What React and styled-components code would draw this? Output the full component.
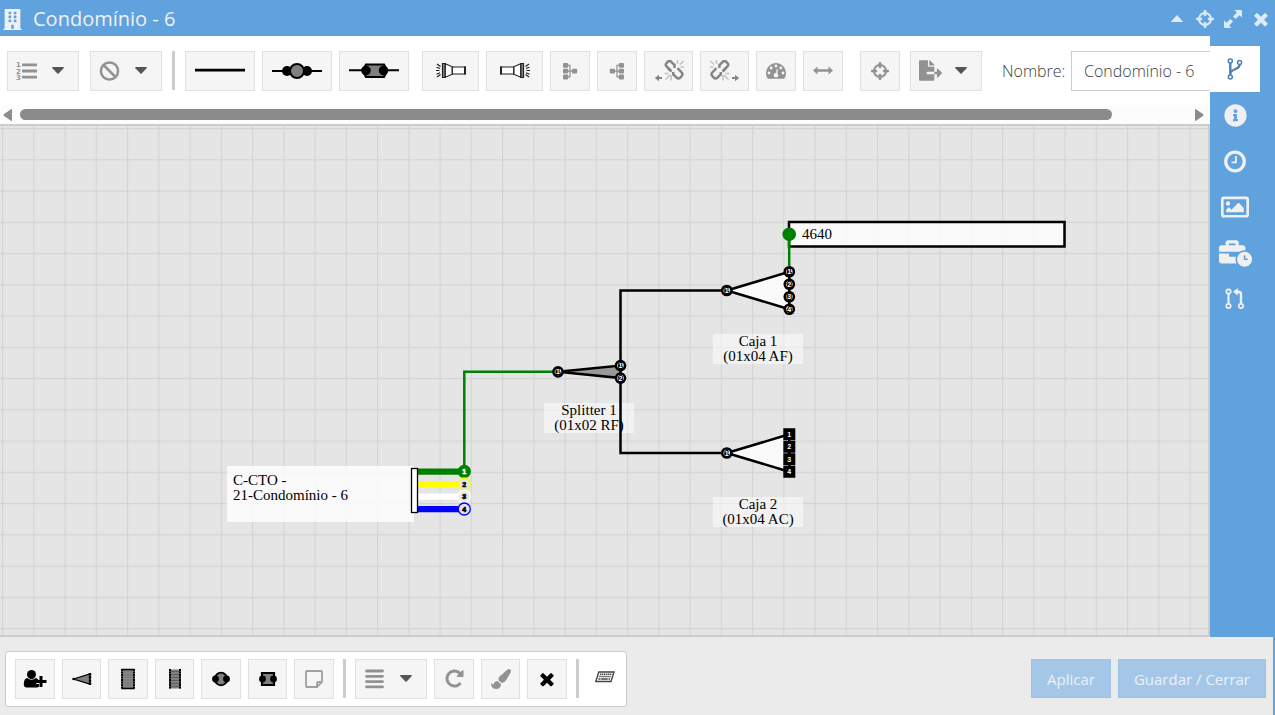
import React, { useState } from 'react';
import styled, { createGlobalStyle } from 'styled-components';
import { FaBuilding, FaFileExport, FaInfoCircle, FaRegImage, FaBusinessTime, FaPaintBrush } from 'react-icons/fa';

const GlobalStyle = createGlobalStyle`
  * { box-sizing: border-box; }
  html, body, #root { height: 100%; }
  body {
    margin: 0;
    overflow: hidden;
    font-family: "Open Sans", "Noto Sans", sans-serif;
    font-size: 16px;
    color: #404040;
  }
`;

const Window = styled.div`
  height: 100%;
  display: flex;
  flex-direction: column;
  background: #5fa2dd;
`;

const TitleBar = styled.header`
  height: 36px;
  flex: none;
  display: flex;
  align-items: center;
  padding: 2px 4px 0 2px;
  color: #f0f0f0;
`;

const Title = styled.h1`
  flex: 1;
  margin: 0 0 0 10px;
  font-size: 20px;
  font-weight: 400;
  line-height: 28px;
`;

const WindowActions = styled.div`
  display: flex;
  gap: 8px;
`;

const PlainButton = styled.button`
  display: flex;
  align-items: center;
  justify-content: center;
  width: 20px;
  height: 20px;
  padding: 0;
  border: 0;
  background: none;
  color: #dcecf9;
`;

const Body = styled.div`
  flex: 1;
  min-height: 0;
  display: flex;
`;

const Main = styled.main`
  flex: 1;
  min-width: 0;
  display: flex;
  flex-direction: column;
  background: #fff;
`;

const Toolbar = styled.div`
  height: 69px;
  flex: none;
  display: flex;
  align-items: center;
  padding-left: 7px;
  overflow: hidden;
`;

const ToolGroup = styled.div`
  display: flex;
  gap: ${(p) => p.$gap || 7}px;
  margin-right: ${(p) => p.$after || 0}px;
`;

const ToolButton = styled.button`
  flex: none;
  display: flex;
  align-items: center;
  justify-content: center;
  width: ${(p) => p.$width || 40}px;
  height: 40px;
  padding: 0;
  border: 1px solid #e0e0e0;
  background: #f5f5f5;
  color: ${(p) => (p.$dark ? '#000' : '#929292')};
`;

const MenuButton = styled(ToolButton)`
  width: 72px;
  justify-content: space-between;
  padding: 0 14px 0 8px;
`;

const Separator = styled.div`
  flex: none;
  width: 3px;
  height: 39px;
  margin: 0 ${(p) => p.$space}px;
  background: #ccc;
`;

const NameLabel = styled.label`
  flex: none;
  width: 69px;
  font-weight: 300;
  line-height: 24px;
`;

const NameInput = styled.input`
  flex: none;
  width: 200px;
  height: 40px;
  padding: 0 12px;
  border: 1px solid #ccc;
  background: #fff;
  font: inherit;
  font-weight: 300;
  color: #404040;
`;

const ScrollBar = styled.div`
  height: 19px;
  flex: none;
  display: flex;
  align-items: center;
  justify-content: space-between;
  padding: 0 6px 0 3px;
  background: #fcfcfc;
  color: #8b8b8b;
`;

const ScrollTrack = styled.div`
  flex: 1;
  margin: 0 7px 0 8px;
`;

const ScrollThumb = styled.div`
  width: 93.5%;
  height: 11px;
  border-radius: 6px;
  background: #8b8b8b;
`;

const CanvasFrame = styled.div`
  flex: 1;
  min-height: 0;
  border: solid #ccc;
  border-width: 2px 2px 2px 0;
  background: #e5e5e5;
`;

const Diagram = styled.svg`
  display: block;
  width: 100%;
  height: 100%;
  font-family: "Liberation Serif", serif;
  font-size: 15px;
`;

const PortNumber = styled.text`
  font-family: "Liberation Sans", sans-serif;
  font-size: 7px;
  font-weight: 700;
  text-anchor: middle;
  paint-order: stroke;
`;

const SideBar = styled.nav`
  width: 65px;
  flex: none;
  padding-top: 10px;
  color: #f0f0f0;
`;

const SideTab = styled.button`
  display: flex;
  align-items: center;
  justify-content: center;
  width: 50px;
  height: 46px;
  padding: 0;
  border: 0;
  background: ${(p) => (p.$active ? '#fff' : 'none')};
  color: ${(p) => (p.$active ? '#4a80b4' : 'inherit')};

  svg { overflow: visible; }
`;

const Footer = styled.footer`
  height: 78px;
  flex: none;
  display: flex;
  align-items: center;
  justify-content: space-between;
  margin-right: 2px;
  padding: 5px 7px 0 5px;
  background: #ebebeb;
`;

const BottomTools = styled.div`
  display: flex;
  align-items: center;
  height: 56px;
  padding: 0 4px 0 9px;
  border: 1px solid #ccc;
  border-radius: 3px;
  background: #fff;
`;

const KeyboardButton = styled(PlainButton)`
  width: 34px;
  height: 40px;
  color: #444;
`;

const FooterActions = styled.div`
  display: flex;
  gap: 7px;
`;

const ActionButton = styled.button`
  height: 39px;
  padding: 0 15px;
  border: 1px solid #9cc3e6;
  background: #a5c7e7;
  color: #ebf1f7;
  font: inherit;
  font-size: 15px;
`;

const Svg = ({ w, h, children }) => (
  <svg width={w} height={h} viewBox={`0 0 ${w} ${h}`} fill="currentColor" aria-hidden="true">
    {children}
  </svg>
);

const CaretDown = () => (
  <Svg w={12} h={7}>
    <path d="M0.8 0h10.4q1 0.4 0.4 1.2L6.6 6.5q-.6.5-1.2 0L.4 1.2Q-.2.4.8 0z" fill="#555" />
  </Svg>
);

const ListIcon = () => (
  <Svg w={22} h={20}>
    <path d="M6 2.400h15v2.800H6zM6 8.600h15v2.800H6zM6 14.800h15v2.800H6z" />
    <g fontSize="7" fontWeight="700" fontFamily="DejaVu Sans, sans-serif">
      <text x="0" y="6">1</text>
      <text x="0" y="12.500">2</text>
      <text x="0" y="19">3</text>
    </g>
  </Svg>
);

const BanIcon = () => (
  <Svg w={22} h={20}>
    <g fill="none" stroke="currentColor" strokeWidth="2.500">
      <circle cx="10.500" cy="10" r="8.600" />
      <path d="M4.500 4l12 12" />
    </g>
  </Svg>
);

const LineIcon = () => (
  <Svg w={50} h={16}>
    <path d="M0 5.800h50v2.600H0z" />
  </Svg>
);

const RoundSpliceIcon = () => (
  <Svg w={50} h={16}>
    <path d="M0 7h50v2H0z" />
    <circle cx="15" cy="8" r="5" />
    <circle cx="35" cy="8" r="5" />
    <circle cx="25" cy="8" r="7" fill="#808080" stroke="#000" strokeWidth="2" />
  </Svg>
);

const BoxSpliceIcon = () => (
  <Svg w={50} h={16}>
    <path d="M0 6.200h50v2H0z" />
    <path d="M17 1.500h18l2 4v4l-2 4.500H17l-2-4.500v-4z" fill="#808080" stroke="#000" strokeWidth="2.200" />
    <circle cx="17" cy="7.500" r="4.800" />
    <circle cx="34.500" cy="7.500" r="4.800" />
  </Svg>
);

const TorchIcon = ({ flip }) => (
  <Svg w={30} h={18}>
    <g transform={flip ? 'translate(30 0) scale(-1 1)' : undefined} fill="none" stroke="#222" strokeWidth="1.200">
      <path d="M0 8.500h3.500M.5 5.200l3.500 1.300M.5 12.200l3.500-1.500M1 2l3.500 2.500M1 15l3.500-2.500" />
      <path d="M6.500 1.500h2.800v14H6.500z" fill="#888" />
      <path d="M9.300 1.800l7 3v7.400l-7 3z" fill="#fff" />
      <path d="M16.300 5H29v7H16.300z" fill="#fff" />
      <path d="M29 4.500v8" strokeWidth="2" />
    </g>
  </Svg>
);

const TreeIcon = ({ flip }) => (
  <Svg w={16} h={18}>
    <g transform={flip ? 'translate(16 0) scale(-1 1)' : undefined}>
      <rect x="1" y="1" width="5.200" height="4.800" rx="1" />
      <rect x="1" y="6.800" width="5.200" height="4.800" rx="1" />
      <rect x="1" y="12.600" width="5.200" height="4.800" rx="1" />
      <rect x="10" y="6.800" width="5.200" height="4.800" rx="1" />
      <path d="M5 3.300h3v11.500H5M5 9.200h6" fill="none" stroke="currentColor" strokeWidth="1.200" />
    </g>
  </Svg>
);

const UnlinkIcon = ({ flip }) => (
  <Svg w={30} h={22}>
    <g transform={flip ? 'translate(30 0) scale(-1 1)' : undefined} fill="none" stroke="#858585" strokeWidth="2.500">
      <path d="M16.500 10.500l-4-4q-1.500-1.800 0-3.500l1.200-1.200q1.800-1.500 3.500 0L20.600 5v3" />
      <path d="M14.500 8.500l3 3" />
      <path d="M23.500 8.200l4.200 4.300q1.500 1.800 0 3.500l-1.500 1.700q-1.800 1.500-3.500 0l-3.500-3.300v-2.500" />
      <path d="M23.500 0v4M29.500 1l-3.500 3.500M26.500 7h3.500M17 15v5.500M10.500 13.500h4M16 15l-4.500 4.500" stroke="#c4c4c4" strokeWidth="1.600" />
      <path d="M3 18h5" strokeWidth="2" />
      <path d="M5 14.800L.8 18 5 21.200z" fill="#858585" stroke="none" />
    </g>
  </Svg>
);

const GaugeIcon = () => (
  <Svg w={22} h={18}>
    <path d="M11 1a10 10 0 0 0-10 10q0 3 1.500 5.300.3.500.9.500h15.200q.6 0 .9-.5Q21 14 21 11A10 10 0 0 0 11 1z" />
    <g fill="#f5f5f5">
      <circle cx="4" cy="11" r="1.400" />
      <circle cx="6.200" cy="6" r="1.400" />
      <circle cx="11" cy="4" r="1.400" />
      <circle cx="15.800" cy="6" r="1.400" />
      <circle cx="18" cy="11" r="1.400" />
      <circle cx="11" cy="13.300" r="2.300" />
      <path d="M10.300 12.500L12 6.800l1 .3-1.100 6z" />
    </g>
  </Svg>
);

const ArrowsIcon = () => (
  <Svg w={20} h={16}>
    <path d="M0 7.500L4.500 3.500v2.800h11V3.500L20 7.500l-4.500 4V8.700h-11v2.800z" />
  </Svg>
);

const TargetIcon = () => (
  <Svg w={18} h={18}>
    <circle cx="9" cy="9" r="6" fill="none" stroke="currentColor" strokeWidth="2" />
    <path d="M8 .3h2v5.500H8zM8 12.200h2v5.500H8zM.3 8h5.500v2H.3zM12.200 8h5.500v2h-5.500z" stroke="currentColor" strokeWidth=".6" />
  </Svg>
);

const ExpandIcon = () => (
  <Svg w={18} h={18}>
    <path d="M10.500 0H17q1 0 1 1v6.500L15.500 5.200 11.600 9 9 6.400l3.900-3.900zM7.500 18H1q-1 0-1-1v-6.500l2.500 2.300L6.400 9 9 11.600l-3.900 3.900z" />
  </Svg>
);

const TimesIcon = ({ size }) => (
  <svg width={size} height={size} viewBox="0 0 1792 1792" fill="currentColor" aria-hidden="true">
    <path d="M1490 1322q0 40-28 68l-136 136q-28 28-68 28t-68-28l-294-294-294 294q-28 28-68 28t-68-28l-136-136q-28-28-28-68t28-68l294-294-294-294q-28-28-28-68t28-68l136-136q28-28 68-28t68 28l294 294 294-294q28-28 68-28t68 28l136 136q28 28 28 68t-28 68l-294 294 294 294q28 28 28 68z" />
  </svg>
);

const ForkIcon = () => (
  <Svg w={16} h={22}>
    <g fill="none" stroke="currentColor">
      <circle cx="3.300" cy="3" r="2" strokeWidth="1.500" />
      <circle cx="12.600" cy="4.500" r="2" strokeWidth="1.500" />
      <circle cx="3.300" cy="19" r="2" strokeWidth="1.500" />
      <path d="M3.300 5v12M12.600 6.500c0 6-9.300 3.500-9.300 9.500" strokeWidth="2.400" />
    </g>
  </Svg>
);

const PullIcon = () => (
  <Svg w={20} h={22}>
    <g fill="none" stroke="currentColor">
      <circle cx="3.500" cy="3.500" r="2.200" strokeWidth="1.700" />
      <circle cx="3.500" cy="18" r="2.200" strokeWidth="1.700" />
      <circle cx="16" cy="18" r="2.200" strokeWidth="1.700" />
      <path d="M3.500 5.500v10.500" strokeWidth="2.200" />
      <path d="M12 3.800h1.500q2.500 0 2.500 3v9" strokeWidth="2.400" />
    </g>
    <path d="M12.800 0v7.600L8 3.800z" />
  </Svg>
);

const ClockIcon = () => (
  <Svg w={22} h={22}>
    <circle cx="11" cy="11.500" r="9.300" fill="none" stroke="currentColor" strokeWidth="3.200" />
    <path d="M11 6h1.800v7.300H7.500v-1.800H11z" />
  </Svg>
);

const UserPlusIcon = () => (
  <Svg w={24} h={20}>
    <circle cx="8.500" cy="5.500" r="4.500" />
    <path d="M4 9q4.500 3.500 9 0 1.500.3 2.500 2h-2.300v4H16v2.500q-1 1.200-2.500 1H3.500Q.8 18.200.8 15.500.8 9.800 4 9z" />
    <path d="M16.500 7h3v4h4v3h-4v4h-3v-4h-4v-3h4z" />
  </Svg>
);

const SplitterIcon = () => (
  <Svg w={20} h={16}>
    <path d="M1.500 8L18 3v10z" fill="#808080" stroke="#000" strokeWidth="1.300" />
    <circle cx="1.800" cy="8" r="1.300" />
    <path d="M18 2v12" stroke="#000" strokeWidth="2.400" strokeDasharray="2.400 .8" />
  </Svg>
);

const RackIcon = ({ slim }) => (
  <Svg w={16} h={22}>
    <rect x={slim ? 2 : 1.500} y="1.500" width={slim ? 12 : 13} height="19" fill="#808080" />
    {slim ? (
      <path d="M3 3.500h10M3 6.500h10M3 9.500h10M3 12.500h10M3 15.500h10M3 18.500h10" stroke="#555" strokeWidth=".8" />
    ) : (
      <path d="M1.500 1.500h13M1.500 20.500h13" stroke="#000" strokeWidth="1.300" />
    )}
    <path d={slim ? 'M3 1v20M13 1v20' : 'M2 1v20M14 1v20'} stroke="#000" strokeWidth="2" strokeDasharray="2 .5" />
  </Svg>
);

const RoundBoxIcon = () => (
  <Svg w={20} h={16}>
    <circle cx="10" cy="8" r="6.300" fill="#808080" stroke="#000" strokeWidth="1.800" />
    <circle cx="4.500" cy="8" r="3.400" />
    <circle cx="15.500" cy="8" r="3.400" />
  </Svg>
);

const SquareBoxIcon = () => (
  <Svg w={20} h={16}>
    <path d="M4 2h12v12H4z" fill="#808080" stroke="#000" strokeWidth="2.200" />
    <circle cx="4.500" cy="8" r="3.400" />
    <circle cx="15.500" cy="8" r="3.400" />
  </Svg>
);

const NoteIcon = () => (
  <Svg w={18} h={18}>
    <path d="M1 2q0-1 1-1h14q1 0 1 1v10l-5 5H2q-1 0-1-1zM12 17v-4q0-1 1-1h4" fill="none" stroke="#a0a0a0" strokeWidth="1.800" />
  </Svg>
);

const LinesIcon = () => (
  <Svg w={20} h={20}>
    <path d="M2.500 2h16M2.500 7.300h16M2.500 12.600h16M2.500 17.900h16" stroke="currentColor" strokeWidth="2.800" strokeLinecap="round" />
  </Svg>
);

const RepeatIcon = () => (
  <svg width="21" height="21" viewBox="0 0 1792 1792" fill="currentColor" aria-hidden="true">
    <path d="M1664 256v448q0 26-19 45t-45 19h-448q-42 0-59-40-17-39 14-69l138-138q-148-137-349-137-104 0-198.500 40.500t-163.500 109.500-109.500 163.500-40.500 198.500 40.500 198.500 109.500 163.500 163.500 109.500 198.500 40.500q119 0 225-52t179-147q7-10 23-12 15 0 25 9l137 138q9 8 9.500 20.500t-7.500 22.500q-109 132-264 204.500t-327 72.500q-156 0-298-61t-245-164-164-245-61-298 61-298 164-245 245-164 298-61q147 0 284.500 55.500t244.500 156.500l130-129q29-31 70-14 39 17 39 59z" />
  </svg>
);

const KeyboardIcon = () => (
  <Svg w={20} h={15}>
    <path d="M3.800 1H19l-3 9.500H.8z" fill="none" stroke="currentColor" strokeWidth="1.400" />
    <path d="M5 3.300h12M4.300 5.500h12" stroke="currentColor" strokeWidth="1.500" strokeDasharray="1.400 .6" />
    <path d="M3.500 8h2M6.200 8h6.500M13.500 8h1.500" stroke="currentColor" strokeWidth="1.400" />
  </Svg>
);

const ScrollArrow = ({ flip }) => (
  <Svg w={9} h={12}>
    <path d={flip ? 'M0 0v12q1 0 2-1l6-4q1-1 0-2L2 1Q1 0 0 0z' : 'M9 0v12q-1 0-2-1L1 7Q0 6 1 5l6-4q1-1 2-1z'} />
  </Svg>
);

// Port of a splitter: round for fused, square for connectorised
const Port = ({ x, y, n, square }) => (
  <g>
    {square ? (
      <rect x={x - 6} y={y - 6} width="12" height="12" />
    ) : (
      <circle cx={x} cy={y} r="4.600" fill="#e5e5e5" stroke="#000" strokeWidth="2.500" />
    )}
    <PortNumber x={x} y={y + 2.500} fill="#fff" stroke="#000" strokeWidth="2">{n}</PortNumber>
  </g>
);

const Splitter = ({ x, y, outputs, fill, square }) => {
  const top = y - ((outputs - 1) * 12.5) / 2;
  const bottom = y + ((outputs - 1) * 12.5) / 2;
  return (
    <g>
      <path d={`M${x} ${y}L${x + 62.5} ${top}V${bottom}z`} fill={fill} stroke="#000" strokeWidth="2.500" />
      <Port x={x} y={y} n={1} />
      {Array.from({ length: outputs }, (_, i) => (
        <Port key={i} x={x + 62.5} y={top + i * 12.5} n={i + 1} square={square} />
      ))}
    </g>
  );
};

const Caption = ({ x, y, lines }) => (
  <g>
    <rect x={x - 45} y={y} width="90" height="30" fill="#fff" fillOpacity=".5" />
    {lines.map((line, i) => (
      <text key={line} x={x} y={y + 12 + i * 15} textAnchor="middle">{line}</text>
    ))}
  </g>
);

const fibers = [
  { color: 'green', filled: true },
  { color: 'yellow' },
  { color: 'white' },
  { color: 'blue' },
];

const Cable = ({ x, y }) => (
  <g>
    <rect x={x - 188} y={y - 3} width="187" height="56" fill="#fff" fillOpacity=".8" />
    <text x={x - 182} y={y + 16}>C-CTO -</text>
    <text x={x - 182} y={y + 31}>21-Condomínio - 6</text>
    {fibers.map(({ color, filled }, i) => {
      const fy = y + 2.5 + i * 12.5;
      const ink = filled ? '#fff' : '#000';
      return (
        <g key={color}>
          <path d={`M${x + 3} ${fy}H${x + 44}`} stroke={color} strokeWidth="6.250" />
          <circle cx={x + 49.300} cy={fy} r="6" fill={filled ? color : '#e5e5e5'} stroke={color} strokeWidth="1.300" />
          <PortNumber x={x + 49.300} y={fy + 2.500} fill={ink} stroke={ink} strokeWidth=".6">{i + 1}</PortNumber>
        </g>
      );
    })}
    <rect x={x - 3.500} y={y - .500} width="6" height="44" fill="#fff" stroke="#000" strokeWidth="1.300" />
  </g>
);

const Network = () => (
  <Diagram role="img" aria-label="Condomínio - 6">
    <defs>
      <pattern id="grid" x="2" y="2" width="31.250" height="31.250" patternUnits="userSpaceOnUse">
        <path d="M.600 0v31.250M0 .600h31.250" stroke="#d4d4d4" strokeWidth="1.200" />
      </pattern>
    </defs>
    <rect width="100%" height="100%" fill="url(#grid)" />

    <rect x="789" y="96" width="275.500" height="24.500" fill="#fff" fillOpacity=".8" stroke="#000" strokeWidth="2.500" />
    <text x="802" y="113">4640</text>

    <Caption x={589} y={277} lines={['Splitter 1', '(01x02 RF)']} />
    <Caption x={758} y={208} lines={['Caja 1', '(01x04 AF)']} />
    <Caption x={758} y={371} lines={['Caja 2', '(01x04 AC)']} />

    <g fill="none" strokeWidth="2.500">
      <path d="M464.300 340V245.800H558" stroke="green" />
      <path d="M620.500 240V164.500H727M620.500 252V327H727" stroke="#000" />
    </g>
    <Splitter x={558} y={245.800} outputs={2} fill="#999" />
    <Splitter x={726.800} y={164.500} outputs={4} fill="#fafafa" />
    <Splitter x={726.800} y={327} outputs={4} fill="#fafafa" square />
    <Cable x={415} y={343} />
    <path d="M789.200 108V140" stroke="green" strokeWidth="2.500" />
    <circle cx="789.200" cy="108.200" r="6.800" fill="green" />
  </Diagram>
);

const tabs = [
  { name: 'Diagrama', icon: <ForkIcon /> },
  { name: 'Información', icon: <FaInfoCircle size={23} /> },
  { name: 'Historial', icon: <ClockIcon /> },
  { name: 'Imágenes', icon: <FaRegImage size={28} /> },
  { name: 'Trabajos', icon: <FaBusinessTime size={33} /> },
  { name: 'Cambios', icon: <PullIcon /> },
];

const App = () => {
  const [name, setName] = useState('Condomínio - 6');
  const [tab, setTab] = useState('Diagrama');

  return (
    <Window>
      <GlobalStyle />
      <TitleBar>
        <FaBuilding size={21} />
        <Title>Condomínio - 6</Title>
        <WindowActions>
          <PlainButton aria-label="Contraer">
            <Svg w={12} h={8}><path d="M6 0l5.800 6.500q.3.500-.5.500H.7q-.8 0-.5-.5z" /></Svg>
          </PlainButton>
          <PlainButton aria-label="Centrar"><TargetIcon /></PlainButton>
          <PlainButton aria-label="Maximizar"><ExpandIcon /></PlainButton>
          <PlainButton aria-label="Cerrar"><TimesIcon size={20} /></PlainButton>
        </WindowActions>
      </TitleBar>

      <Body>
        <Main>
          <Toolbar>
            <ToolGroup $gap={11}>
              <MenuButton aria-label="Numeración"><ListIcon /><CaretDown /></MenuButton>
              <MenuButton aria-label="Filtro"><BanIcon /><CaretDown /></MenuButton>
            </ToolGroup>
            <Separator $space={10} />
            <ToolGroup $after={13}>
              <ToolButton $width={70} $dark aria-label="Línea"><LineIcon /></ToolButton>
              <ToolButton $width={70} $dark aria-label="Fusión"><RoundSpliceIcon /></ToolButton>
              <ToolButton $width={70} $dark aria-label="Conector"><BoxSpliceIcon /></ToolButton>
            </ToolGroup>
            <ToolGroup $after={17}>
              <ToolButton $width={57} aria-label="Luz izquierda"><TorchIcon /></ToolButton>
              <ToolButton $width={57} aria-label="Luz derecha"><TorchIcon flip /></ToolButton>
              <ToolButton aria-label="Agrupar"><TreeIcon /></ToolButton>
              <ToolButton aria-label="Desagrupar"><TreeIcon flip /></ToolButton>
              <ToolButton $width={49} aria-label="Desconectar izquierda"><UnlinkIcon /></ToolButton>
              <ToolButton $width={49} aria-label="Desconectar derecha"><UnlinkIcon flip /></ToolButton>
              <ToolButton aria-label="Potencia"><GaugeIcon /></ToolButton>
              <ToolButton aria-label="Ancho"><ArrowsIcon /></ToolButton>
            </ToolGroup>
            <ToolGroup $gap={10} $after={20}>
              <ToolButton aria-label="Centrar diagrama"><TargetIcon /></ToolButton>
              <MenuButton aria-label="Exportar"><FaFileExport size={23} /><CaretDown /></MenuButton>
            </ToolGroup>
            <NameLabel htmlFor="nombre">Nombre:</NameLabel>
            <NameInput id="nombre" value={name} onChange={(e) => setName(e.target.value)} />
          </Toolbar>
          <ScrollBar>
            <ScrollArrow />
            <ScrollTrack><ScrollThumb /></ScrollTrack>
            <ScrollArrow flip />
          </ScrollBar>
          <CanvasFrame>
            <Network />
          </CanvasFrame>
        </Main>
        <SideBar>
          {tabs.map((t) => (
            <SideTab key={t.name} aria-label={t.name} $active={t.name === tab} onClick={() => setTab(t.name)}>
              {t.icon}
            </SideTab>
          ))}
        </SideBar>
      </Body>

      <Footer>
        <BottomTools>
          <ToolGroup>
            <ToolButton $dark aria-label="Agregar cliente"><UserPlusIcon /></ToolButton>
            <ToolButton $dark $width={39} aria-label="Splitter"><SplitterIcon /></ToolButton>
            <ToolButton $dark aria-label="Bandeja"><RackIcon /></ToolButton>
            <ToolButton $dark $width={39} aria-label="Rack"><RackIcon slim /></ToolButton>
            <ToolButton $dark aria-label="Caja redonda"><RoundBoxIcon /></ToolButton>
            <ToolButton $dark $width={39} aria-label="Caja cuadrada"><SquareBoxIcon /></ToolButton>
            <ToolButton aria-label="Nota"><NoteIcon /></ToolButton>
          </ToolGroup>
          <Separator $space={9} />
          <ToolGroup>
            <MenuButton aria-label="Alinear"><LinesIcon /><CaretDown /></MenuButton>
            <ToolButton aria-label="Repetir"><RepeatIcon /></ToolButton>
            <ToolButton $width={39} aria-label="Pincel"><FaPaintBrush size={20} /></ToolButton>
            <ToolButton $dark aria-label="Eliminar"><TimesIcon size={20} /></ToolButton>
          </ToolGroup>
          <Separator $space={9} />
          <KeyboardButton aria-label="Teclado"><KeyboardIcon /></KeyboardButton>
        </BottomTools>
        <FooterActions>
          <ActionButton>Aplicar</ActionButton>
          <ActionButton>Guardar / Cerrar</ActionButton>
        </FooterActions>
      </Footer>
    </Window>
  );
};

export default App;
